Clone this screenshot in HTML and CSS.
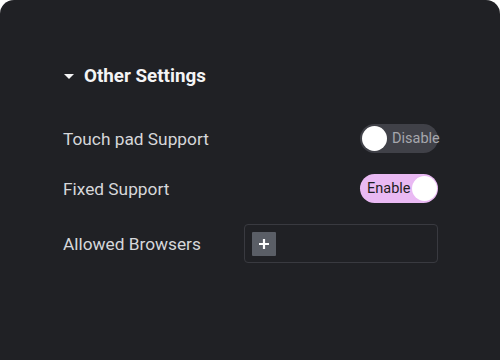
FILE: index.html
```html
<!DOCTYPE html>
<html lang="en">
<head>
    <meta charset="UTF-8">
    <title>Other Settings</title>
    <link rel="stylesheet" href="styles.css">
</head>
<body>
<div class="panel">
    <div class="section-title">
        <span class="caret"></span>
        <span>Other Settings</span>
    </div>

    <div class="row">
        <span class="label">Touch pad Support</span>
        <div class="switch">
            <span class="knob"></span>
            <span class="switch-text">Disable</span>
        </div>
    </div>

    <div class="row">
        <span class="label">Fixed Support</span>
        <div class="switch on">
            <span class="switch-text">Enable</span>
            <span class="knob"></span>
        </div>
    </div>

    <div class="row browsers-row">
        <span class="label">Allowed Browsers</span>
        <div class="browsers">
            <span class="add-btn">
                <svg width="12" height="12" viewBox="0 0 12 12">
                    <path d="M6 1v10M1 6h10" stroke="#ffffff" stroke-width="2.2" fill="none"/>
                </svg>
            </span>
        </div>
    </div>
</div>
</body>
</html>
```

FILE: styles.css
```css
*{
    margin: 0;
    padding: 0;
    box-sizing: border-box;
}
body{
    background: #ffffff;
    font-family: Roboto, "Liberation Sans", sans-serif;
}
.panel{
    width: 500px;
    height: 360px;
    background-color: #202125;
    border-radius: 14px 14px 0 0;
    padding: 64px 62px 0 63px;
}
.section-title{
    display: flex;
    align-items: center;
    height: 24px;
    color: #f4f4f5;
    font-size: 18.8px;
    font-weight: bold;
    margin-bottom: 36px;
}
.caret{
    width: 0;
    height: 0;
    border-left: 5.5px solid transparent;
    border-right: 5.5px solid transparent;
    border-top: 5.5px solid #f4f4f5;
    margin: 1px 10px 0 1px;
}
.row{
    display: flex;
    align-items: center;
    justify-content: space-between;
    margin-bottom: 21px;
}
.browsers-row{
    margin-top: 1px;
}
.label{
    color: #d6d7da;
    font-size: 17.3px;
}
.switch{
    width: 78px;
    height: 29px;
    border-radius: 15px;
    background-color: #404148;
    display: flex;
    align-items: center;
    gap: 5px;
    padding-left: 2px;
}
.switch .knob{
    width: 25px;
    height: 25px;
    border-radius: 50%;
    background-color: #ffffff;
    flex-shrink: 0;
}
.switch-text{
    font-size: 14.5px;
    color: #a6a7ad;
    white-space: nowrap;
}
.switch.on{
    background-color: #e9b9f3;
    justify-content: space-between;
    padding: 0 1px 0 7px;
    gap: 0;
}
.switch.on .switch-text{
    color: #1e1e23;
}
.browsers{
    width: 194px;
    height: 39px;
    border: 1px solid #393a40;
    border-radius: 4px;
    padding: 7px;
    display: flex;
    align-items: center;
}
.add-btn{
    width: 24px;
    height: 24px;
    background-color: #5a5e66;
    border-radius: 1px;
    display: flex;
    align-items: center;
    justify-content: center;
}
```
